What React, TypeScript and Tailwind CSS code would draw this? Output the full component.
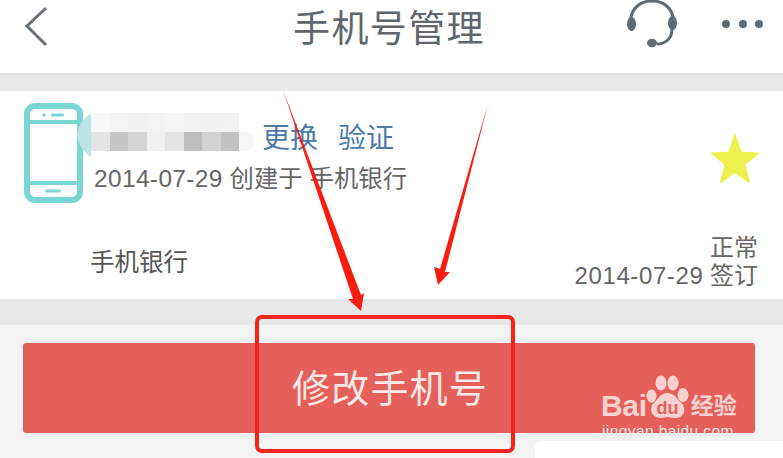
const cjk = "font-['Liberation_Sans','Noto_Sans_CJK_SC',sans-serif]";

const PhoneIcon = () => (
  <svg width="60" height="100" viewBox="0 0 60 100" className="shrink-0">
    <rect x="3" y="3" width="53" height="94" rx="8" fill="#fff" stroke="#7bd5d3" strokeWidth="6" />
    <rect x="4" y="17" width="52" height="4" fill="#7bd5d3" />
    <rect x="4" y="78" width="52" height="4" fill="#7bd5d3" />
    <circle cx="20" cy="12" r="1.8" fill="#7bd5d3" />
    <rect x="27" y="10.5" width="13" height="3" rx="1.5" fill="#7bd5d3" />
    <rect x="21" y="86.5" width="16" height="3" rx="1.5" fill="#7bd5d3" />
  </svg>
);

const Headset = () => (
  <svg width="52" height="50" viewBox="0 0 52 50" fill="none">
    <path d="M5 26C3 11 13 2 26 2s23 9 21 24" stroke="#5f6a72" strokeWidth="3" />
    <path d="M46 30c0 10-7 15-15 15" stroke="#5f6a72" strokeWidth="3" />
    <ellipse cx="5.5" cy="25" rx="4.5" ry="7" fill="#5f6a72" />
    <ellipse cx="46.5" cy="24" rx="4.5" ry="7" fill="#5f6a72" />
    <ellipse cx="26" cy="44" rx="5" ry="4.2" fill="#5f6a72" />
  </svg>
);

const Blur = () => {
  const top = ["#f8f8f8", "#f3f3f3", "#f1f1f1", "#f3f3f3", "#f5f5f5", "#f2f2f2", "#f1f1f1", "#f2f2f2"];
  const bottom = ["#e4e4e4", "#c4c4c4", "#d4d4d4", "#f1f1f1", "#e4e4e4", "#bebebe", "#d2d2d2", "#c2c2c2"];
  return (
    <div className="flex flex-col">
      <div className="flex">
        {top.map((c, i) => (
          <div key={i} className="w-[18.5px] h-[19px]" style={{ backgroundColor: c }} />
        ))}
      </div>
      <div className="flex">
        {bottom.map((c, i) => (
          <div key={i} className="w-[18.5px] h-[19px]" style={{ backgroundColor: c }} />
        ))}
        <div className="w-[15px] h-[19px] bg-[#f6f6f6] rounded-r-[8px]" />
      </div>
    </div>
  );
};

const BaiduMark = () => (
  <div className="absolute left-[601px] top-[374px] w-[150px] text-[#f9d2cf]">
    <div className="flex items-center h-[46px]">
      <span className="font-['Liberation_Sans',sans-serif] font-bold text-[30px] leading-none tracking-[-0.3px] mt-[18px]">Bai</span>
      <svg width="43" height="45" viewBox="0 0 43 45" className="shrink-0 -ml-[1px]">
        <ellipse cx="5.5" cy="21" rx="5" ry="6.5" fill="#f9d2cf" />
        <ellipse cx="15" cy="8" rx="5.5" ry="7.5" fill="#f9d2cf" />
        <ellipse cx="27" cy="8" rx="5.5" ry="7.5" fill="#f9d2cf" />
        <ellipse cx="37" cy="20" rx="5.5" ry="7" fill="#f9d2cf" />
        <path d="M21.5 18c7 0 9 6 14 10 6 6 2 16-7 15-3 0-5-1-7-1s-4 1-7 1c-9 0-12-9-7-15 5-4 7-10 14-10z" fill="#f9d2cf" />
        <text x="21.5" y="39" textAnchor="middle" fontSize="18" fontWeight="700" fontFamily="Liberation Sans" fill="#e55f5b">du</text>
      </svg>
      <span className={`${cjk} font-bold text-[23px] leading-none ml-[2px] mt-[18px] whitespace-nowrap`}>经验</span>
    </div>
    <div className="font-['Liberation_Sans',sans-serif] text-[15.5px] leading-none mt-[3px] ml-[1px] text-[#f4e6e5] tracking-[0.4px] whitespace-nowrap">
      jingyan.baidu.com
    </div>
  </div>
);

export default function App() {
  return (
    <div className={`${cjk} relative w-[783px] h-[458px] overflow-hidden bg-[#f3f3f3]`}>
      <header className="flex items-center justify-between h-[75px] bg-white border-b-2 border-[#dfdfdf] relative">
        <svg width="26" height="42" viewBox="0 0 26 42" fill="none" className="ml-[24px] -mt-[22px]">
          <path d="M22 3 3 21l19 19" stroke="#6b7277" strokeWidth="3" />
        </svg>
        <h1 className="absolute left-[293px] top-[8px] text-[37px] leading-[44px] tracking-[1.4px] text-[#60666b] font-normal whitespace-nowrap">
          手机号管理
        </h1>
        <div className="flex items-center gap-[44px] mr-[20px] -mt-[25px]">
          <Headset />
          <div className="flex gap-[8.5px]">
            <span className="w-[8px] h-[8px] rounded-full bg-[#5f6a72]" />
            <span className="w-[8px] h-[8px] rounded-full bg-[#5f6a72]" />
            <span className="w-[8px] h-[8px] rounded-full bg-[#5f6a72]" />
          </div>
        </div>
      </header>

      <div className="h-[16px] bg-[#e8e8e8]" />

      <section className="h-[208px] bg-white flex flex-col">
        <div className="flex items-start justify-between pl-[24px] pr-[22px] pt-[12px]">
          <div className="flex items-start">
            <PhoneIcon />
            <div className="-ml-[7px] pt-[10px]">
              <div className="flex items-start h-[44px]">
                <svg width="14" height="44" viewBox="0 0 14 44" className="shrink-0">
                  <path d="M14 0v44C4 37 0 28 0 22S4 7 14 0z" fill="#b9e6e4" />
                </svg>
                <Blur />
                <span className="text-[28px] leading-[36px] text-[#4b7aa8] ml-[8px] mt-[8px] whitespace-nowrap">更换</span>
                <span className="text-[28px] leading-[36px] text-[#4b7aa8] ml-[20px] mt-[8px] whitespace-nowrap">验证</span>
              </div>
              <p className="text-[24.4px] leading-[30px] text-[#666] ml-[17px] mt-[7px] whitespace-nowrap">
                <span className="tracking-[0.4px]">2014-07-29</span> 创建于 手机银行
              </p>
            </div>
          </div>
          <svg width="52" height="53" viewBox="0 0 52 50" preserveAspectRatio="none" className="mt-[29px]">
            <path d="M26 1l6.5 17.5L51 19.5 36.5 31 41.5 49 26 39 10.5 49l5-18L1 19.5l18.5-1z" fill="#eef04e" />
          </svg>
        </div>
        <div className="flex items-end justify-between mt-auto pl-[90px] pr-[25px] pb-[9px]">
          <span className="text-[24.5px] leading-[32px] text-[#555] mb-[11px]">手机银行</span>
          <div className="text-right text-[24px] leading-[28px] text-[#666]">
            <div>正常</div>
            <div className="whitespace-nowrap">
              <span className="tracking-[0.6px]">2014-07-29</span> 签订
            </div>
          </div>
        </div>
      </section>

      <div className="h-[26px] bg-[#e8e8e8]" />

      <div className="pl-[23px] pt-[18px] pr-[28px]">
        <button className="w-full h-[90px] rounded-[3px] bg-[#e55f5b] text-[#fbe9e7] text-[38px] tracking-[1.2px] pl-[2px] pt-[2px]">
          修改手机号
        </button>
      </div>

      <div className="absolute left-[535px] top-[441px] w-[248px] h-[17px] bg-white rounded-tl-[6px]" />

      <div className="absolute left-[255px] top-[315px] w-[260px] h-[138px] border-[4px] border-[#f5231a] rounded-[7px]" />

      <svg width="783" height="458" viewBox="0 0 783 458" className="absolute left-0 top-0 pointer-events-none">
        <path d="M283 90 361 295 364 293 361 311 348 299 353 299z" fill="#fb1c10" />
        <path d="M488 104 445 272 450 272 438 285 434 267 440 269z" fill="#fb1c10" />
      </svg>

      <BaiduMark />
    </div>
  );
}
